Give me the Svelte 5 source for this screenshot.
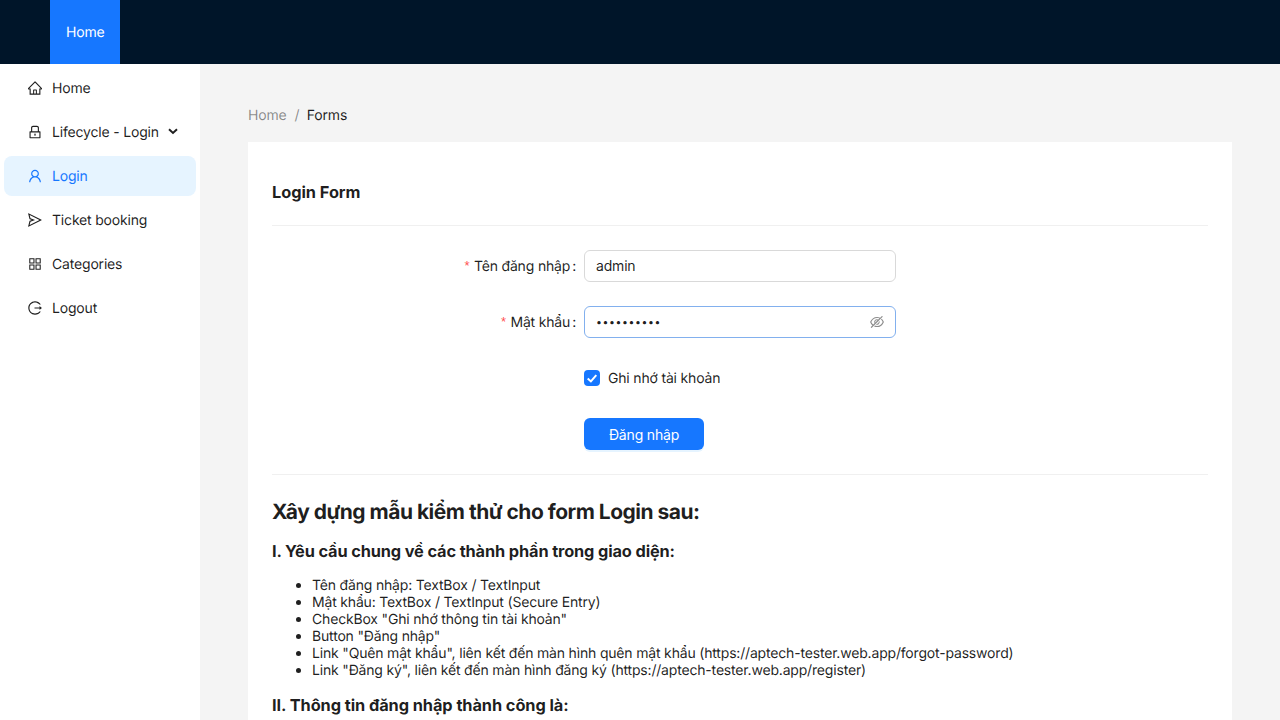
<script>
  const icons = {
    home: 'M946.5 505L560.1 118.8l-25.9-25.9a31.5 31.5 0 00-44.4 0L77.5 505a63.9 63.9 0 00-18.8 46c.4 35.2 29.7 63.3 64.9 63.3h42.5V940h691.8V614.3h43.4c17.1 0 33.2-6.7 45.3-18.8a63.6 63.6 0 0018.7-45.3c0-17-6.7-33.1-18.8-45.2zM568 868H456V664h112v204zm217.9-325.7V868H632V640c0-22.1-17.9-40-40-40H432c-22.1 0-40 17.9-40 40v228H238.1V542.3h-96l370-369.7 23.1 23.1L882 542.3h-96.1z',
    lock: 'M832 464h-68V240c0-70.7-57.3-128-128-128H388c-70.7 0-128 57.3-128 128v224h-68c-17.7 0-32 14.3-32 32v384c0 17.7 14.3 32 32 32h640c17.7 0 32-14.3 32-32V496c0-17.7-14.3-32-32-32zM332 240c0-30.9 25.1-56 56-56h248c30.9 0 56 25.1 56 56v224H332V240zm460 600H232V536h560v304zM484 701v53c0 4.4 3.6 8 8 8h40c4.4 0 8-3.6 8-8v-53a48.01 48.01 0 10-56 0z',
    user: 'M858.5 763.6a374 374 0 00-80.6-119.5 375.63 375.63 0 00-119.5-80.6c-.4-.2-.8-.3-1.2-.5C719.5 518 760 444.7 760 362c0-137-111-248-248-248S264 225 264 362c0 82.7 40.5 156 102.8 201.1-.4.2-.8.3-1.2.5-44.8 18.9-85 46-119.5 80.6a375.63 375.63 0 00-80.6 119.5A371.7 371.7 0 00136 901.8a8 8 0 008 8.2h60c4.4 0 7.9-3.5 8-7.8 2-77.2 33-149.5 87.8-204.3 56.7-56.7 132-87.9 212.2-87.9s155.5 31.2 212.2 87.9C779 752.7 810 825 812 902.2c.1 4.4 3.6 7.8 8 7.8h60a8 8 0 008-8.2c-1-47.8-10.9-94.3-29.5-138.2zM512 534c-45.9 0-89.1-17.9-121.6-50.4S340 407.9 340 362c0-45.9 17.9-89.1 50.4-121.6S466.1 190 512 190s89.1 17.9 121.6 50.4S684 316.1 684 362c0 45.9-17.9 89.1-50.4 121.6S557.9 534 512 534z',
    send: 'M931.4 498.9L94.9 79.5c-3.4-1.7-7.3-2.1-11-1.2a15.99 15.99 0 00-11.7 19.3l86.2 352.2c1.3 5.3 5.2 9.6 10.4 11.3l147.7 50.7-147.6 50.7c-5.2 1.8-9.1 6-10.3 11.3L72.2 926.5c-.9 3.7-.5 7.6 1.2 10.9 3.9 7.9 13.5 11.1 21.5 7.2l836.5-417c3.1-1.5 5.6-4.1 7.2-7.1 3.9-8 .7-17.6-7.2-21.6zM170.8 826.3l50.3-205.6 295.2-101.3c2.3-.8 4.2-2.6 5-5 1.4-4.2-.8-8.7-5-10.2L221.1 403 171 198.2l628 314.9-628.2 313.2z',
    grid: 'M464 144H160c-8.8 0-16 7.2-16 16v304c0 8.8 7.2 16 16 16h304c8.8 0 16-7.2 16-16V160c0-8.8-7.2-16-16-16zm-52 268H212V212h200v200zm452-268H560c-8.8 0-16 7.2-16 16v304c0 8.8 7.2 16 16 16h304c8.8 0 16-7.2 16-16V160c0-8.8-7.2-16-16-16zm-52 268H612V212h200v200zM464 544H160c-8.8 0-16 7.2-16 16v304c0 8.8 7.2 16 16 16h304c8.8 0 16-7.2 16-16V560c0-8.8-7.2-16-16-16zm-52 268H212V612h200v200zm452-268H560c-8.8 0-16 7.2-16 16v304c0 8.8 7.2 16 16 16h304c8.8 0 16-7.2 16-16V560c0-8.8-7.2-16-16-16zm-52 268H612V612h200v200z',
    logout: 'M868 732h-70.3c-4.8 0-9.3 2.1-12.3 5.8-7 8.5-14.5 16.7-22.4 24.5a353.84 353.84 0 01-112.7 75.9A352.8 352.8 0 01512.4 866c-47.9 0-94.3-9.4-137.9-27.8a353.84 353.84 0 01-112.7-75.9 353.28 353.28 0 01-76-112.5C167.3 606.2 158 559.9 158 512s9.4-94.2 27.8-137.8c17.8-42.1 43.4-80 76-112.5s70.5-58.1 112.7-75.9c43.6-18.4 90-27.8 137.9-27.8 47.9 0 94.3 9.3 137.9 27.8 42.2 17.8 80.1 43.4 112.7 75.9 7.9 7.9 15.3 16.1 22.4 24.5 3 3.7 7.6 5.8 12.3 5.8H868c6.3 0 10.2-7 6.7-12.3C798 160.5 663.8 81.6 511.3 82 271.7 82.6 79.6 277.1 82 516.4 84.4 751.9 276.2 942 512.4 942c152.1 0 285.7-78.8 362.3-197.7 3.4-5.3-.4-12.3-6.7-12.3zm88.9-226.3L815 393.7c-5.3-4.2-13-.4-13 6.3v76H488c-4.4 0-8 3.6-8 8v56c0 4.4 3.6 8 8 8h314v76c0 6.7 7.8 10.5 13 6.3l141.9-112a8 8 0 000-12.6z',
    eyeOff: 'M942.2 486.2Q889.47 375.11 816.7 305l-50.88 50.88C807.31 395.53 843.45 447.4 874.7 512 791.5 684.2 673.4 766 512 766q-72.67 0-133.87-22.38L323 798.75Q408 838 512 838q288.3 0 430.2-300.3a60.29 60.29 0 000-51.5zm-63.57-320.64L836 122.88a8 8 0 00-11.32 0L715.31 232.2Q624.86 186 512 186q-288.3 0-430.2 300.3a60.3 60.3 0 000 51.5q56.69 119.4 136.5 191.41L112.48 835a8 8 0 000 11.31L155.17 889a8 8 0 0011.31 0l712.15-712.12a8 8 0 000-11.32zM149.3 512C232.6 339.8 350.7 258 512 258c54.54 0 104.13 9.36 149.12 28.39l-70.3 70.3a176 176 0 00-238.13 238.13l-83.42 83.42C223.1 637.49 183.3 582.28 149.3 512zm246.7 0a112.11 112.11 0 01146.2-106.69L401.31 546.2A112 112 0 01396 512zM508 624c-3.46 0-6.87-.16-10.25-.47l-52.82 52.82a176.09 176.09 0 00227.42-227.42l-52.82 52.82c.31 3.38.47 6.79.47 10.25a111.94 111.94 0 01-112 112z'
  };

  const menu = [
    { label: 'Home', icon: 'home' },
    { label: 'Lifecycle - Login', icon: 'lock', submenu: true },
    { label: 'Login', icon: 'user', active: true },
    { label: 'Ticket booking', icon: 'send' },
    { label: 'Categories', icon: 'grid' },
    { label: 'Logout', icon: 'logout' }
  ];

  const requirements = [
    'Tên đăng nhập: TextBox / TextInput',
    'Mật khẩu: TextBox / TextInput (Secure Entry)',
    'CheckBox "Ghi nhớ thông tin tài khoản"',
    'Button "Đăng nhập"',
    'Link "Quên mật khẩu", liên kết đến màn hình quên mật khẩu (https://aptech-tester.web.app/forgot-password)',
    'Link "Đăng ký", liên kết đến màn hình đăng ký (https://aptech-tester.web.app/register)'
  ];
</script>

{#snippet glyph(name)}
  <svg class="icon" viewBox="64 64 896 896" width="14" height="14" aria-hidden="true"><path d={icons[name]} /></svg>
{/snippet}

<div class="layout">
  <header><a class="tab" href="#home">Home</a></header>
  <div class="body">
    <nav>
      {#each menu as item}
        <a class="item" class:active={item.active} href="#menu">
          {@render glyph(item.icon)}
          <span class="name">{item.label}</span>
          {#if item.submenu}
            <svg class="arrow" width="10" height="7" viewBox="0 0 10 7"><path d="M1 1.2L5 4.9L9 1.2" /></svg>
          {/if}
        </a>
      {/each}
    </nav>
    <main>
      <div class="crumbs"><span>Home</span><span class="sep">/</span><span class="current">Forms</span></div>
      <section>
        <h3 class="title">Login Form</h3>
        <hr />
        <form>
          <div class="row">
            <label for="username"><i>*</i>Tên đăng nhập<b>:</b></label>
            <div class="field"><input id="username" value="admin" /></div>
          </div>
          <div class="row">
            <label for="password"><i>*</i>Mật khẩu<b>:</b></label>
            <div class="field focus">
              <input id="password" type="password" value="1234567890" />
              <span class="eye">{@render glyph('eyeOff')}</span>
            </div>
          </div>
          <div class="row offset">
            <div class="check">
              <span class="box"><svg width="16" height="16" viewBox="0 0 16 16"><path d="M3.7 8.4L6.9 11.4L12.3 5.2" /></svg></span>
              <span class="remember">Ghi nhớ tài khoản</span>
            </div>
          </div>
          <div class="row offset"><button type="button">Đăng nhập</button></div>
        </form>
        <hr />
        <h2>Xây dựng mẫu kiểm thử cho form Login sau:</h2>
        <h3>I. Yêu cầu chung về các thành phần trong giao diện:</h3>
        <ul>
          {#each requirements as line}<li><span>{line}</span></li>{/each}
        </ul>
        <h3 class="second">II. Thông tin đăng nhập thành công là:</h3>
      </section>
    </main>
  </div>
</div>

<style>
  :global(body) { margin: 0; overflow: hidden; }
  .layout {
    height: 720px;
    overflow: hidden;
    display: flex;
    flex-direction: column;
    font-family: Inter, 'Noto Sans', sans-serif;
    font-size: 14px;
    letter-spacing: -0.18px;
    text-rendering: geometricPrecision;
    color: rgba(0, 0, 0, 0.88);
    background: #f4f4f4;
  }
  a { color: inherit; text-decoration: none; }
  header { flex: none; display: flex; height: 64px; padding-left: 50px; background: #001529; box-sizing: border-box; }
  .tab { padding: 1px 16px 0; line-height: 63px; background: #1677ff; color: #fff; width: 38px; }
  .body { display: flex; flex: 1; min-height: 0; }
  nav { flex: none; width: 200px; background: #fff; }
  .item {
    display: flex;
    align-items: center;
    height: 40px;
    margin: 4px;
    padding-left: 24px;
    border-radius: 8px;
    box-sizing: border-box;
  }
  .item.active { background: #e6f4ff; color: #1677ff; }
  .icon { fill: currentColor; flex: none; display: block; }
  .name { margin-left: 10px; white-space: nowrap; line-height: 22px; padding-top: 1px; }
  .arrow { margin: 0 0 1px 9px; fill: none; stroke: currentColor; stroke-width: 2; }
  main { flex: 1; min-width: 0; padding: 41px 48px 0; }
  .crumbs { display: flex; line-height: 22px; color: rgba(0, 0, 0, 0.45); }
  .sep { margin: 0 7.4px 0 8px; }
  .current { color: rgba(0, 0, 0, 0.88); }
  section { margin-top: 15px; padding: 24px; background: #fff; min-height: 700px; }
  hr { border: 0; height: 1px; background: rgba(5, 5, 5, 0.06); margin: 24px 0; }
  h2, h3 { font-weight: 700; }
  h2 { font-size: 21px; line-height: 26px; padding-top: 1px; margin: 0 0 15px; letter-spacing: -0.51px; }
  h3 { font-size: 16.38px; line-height: 20px; margin: 15px 0; letter-spacing: -0.14px; }
  h3.title { margin: 16px 0 0; letter-spacing: -0.05px; height: 19px; }
  h3.second { letter-spacing: -0.08px; }
  .row { display: flex; height: 32px; margin-bottom: 24px; align-items: center; }
  .row:last-child { margin-bottom: 0; }
  .offset { padding-left: 312px; }
  label { width: 304px; margin-right: 8px; text-align: right; line-height: 22px; padding-top: 1px; }
  label i { font: 13px/1 'Liberation Sans', sans-serif; vertical-align: 1px; color: #ff4d4f; margin-right: 4.5px; }
  label b { font-weight: 400; margin-left: 2px; }
  .field {
    display: flex;
    align-items: center;
    width: 312px;
    height: 32px;
    box-sizing: border-box;
    border: 1px solid #d9d9d9;
    border-radius: 6px;
    padding: 0 11px;
  }
  .field.focus { border-color: #82b0ee; }
  input { flex: 1; min-width: 0; border: 0; outline: 0; padding: 0 0 1px; font: inherit; letter-spacing: inherit; color: inherit; background: none; }
  input[type='password'] { font-size: 10.5px; letter-spacing: 0.6px; padding: 0; }
  .eye { color: rgba(0, 0, 0, 0.45); }
  .check { display: flex; align-items: center; gap: 8px; }
  .remember { line-height: 22px; padding-top: 1px; }
  .box { width: 16px; height: 16px; border-radius: 4px; background: #1677ff; }
  .box svg { display: block; fill: none; stroke: #fff; stroke-width: 2; }
  button {
    width: 120px;
    height: 32px;
    border: 0;
    border-radius: 6px;
    padding: 1px 0 0;
    font: inherit;
    letter-spacing: inherit;
    color: #fff;
    background: #1677ff;
    box-shadow: 0 2px 0 rgba(5, 145, 255, 0.1);
  }
  ul { margin: 15px 0 17px; padding-left: 40px; line-height: 17px; text-rendering: auto; }
  li { height: 17px; white-space: nowrap; }
  li span { text-rendering: geometricPrecision; }
</style>
